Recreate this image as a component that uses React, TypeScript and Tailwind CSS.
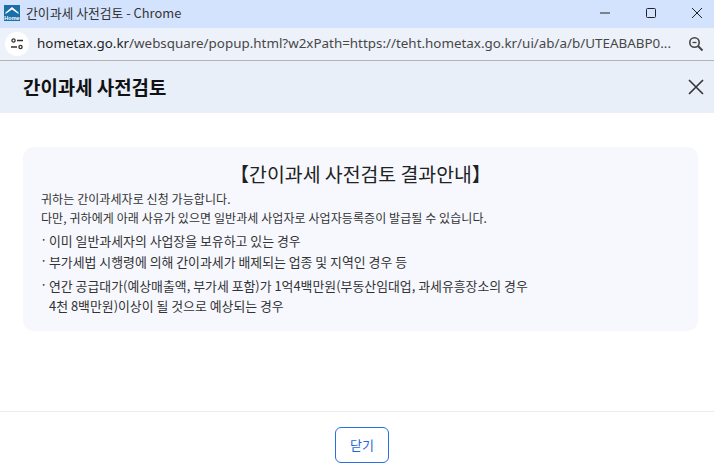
export default function App() {
  const f = { fontFamily: '"Noto Sans CJK KR", "Noto Sans", sans-serif' };
  const items = [
    { lines: ['이미 일반과세자의 사업장을 보유하고 있는 경우'], cls: 'pb-[1px]' },
    { lines: ['부가세법 시행령에 의해 간이과세가 배제되는 업종 및 지역인 경우 등'], cls: 'pb-[4px]' },
    { lines: ['연간 공급대가(예상매출액, 부가세 포함)가 1억4백만원(부동산임대업, 과세유흥장소의 경우', '4천 8백만원)이상이 될 것으로 예상되는 경우'], cls: '' },
  ];
  return (
    <div className="w-[714px] h-[474px] flex flex-col bg-white overflow-hidden" style={f}>
      <div className="h-[28px] bg-[#d3e3fd] flex items-center shrink-0 pb-[2px]">
        <svg width="16" height="16" viewBox="0 0 16 16" className="ml-[4px] mr-[6px] shrink-0">
          <rect width="16" height="16" fill="#1b6fa8" />
          <path d="M1.5 7.5 L8 2 L14.5 7.5 L14.5 9 L8 4.5 L1.5 9 Z" fill="#fff" />
          <text x="8" y="14.5" textAnchor="middle" fontSize="5.5" fontWeight="700" fill="#fff" fontFamily="Liberation Sans, sans-serif">Home</text>
        </svg>
        <span className="text-[12.85px] leading-none text-[#333]">간이과세 사전검토 - Chrome</span>
        <div className="ml-auto flex items-center">
          <svg width="12" height="12" viewBox="0 0 12 12" className="mr-[34px]"><path d="M1 6h10" stroke="#222" strokeWidth="1" /></svg>
          <svg width="12" height="12" viewBox="0 0 12 12" className="mr-[34px]"><rect x="1.5" y="1.5" width="9" height="9" rx="1" fill="none" stroke="#222" strokeWidth="1" /></svg>
          <svg width="12" height="12" viewBox="0 0 12 12" className="mr-[11px]"><path d="M1 1l10 10M11 1L1 11" stroke="#222" strokeWidth="1" /></svg>
        </div>
      </div>
      <div className="h-[32px] bg-[#edf2fa] flex items-center shrink-0 border-b border-[#b4b4b4] box-content">
        <div className="w-[24px] h-[24px] ml-[5px] rounded-full bg-white flex items-center justify-center shrink-0">
          <svg width="14" height="14" viewBox="0 0 14 14" fill="none" stroke="#333" strokeWidth="1.3">
            <circle cx="3.5" cy="3.5" r="1.6" /><path d="M7 3.5h6M1 10h6" /><circle cx="10.5" cy="10" r="1.6" />
          </svg>
        </div>
        <span className="ml-[8px] text-[13.4px] leading-none text-[#1f1f1f] whitespace-nowrap" style={{ fontFamily: '"Noto Sans", sans-serif' }}>
          hometax.go.kr<span className="text-[#474747]">/websquare/popup.html?w2xPath=https://teht.hometax.go.kr/ui/ab/a/b/UTEABABP0...</span>
        </span>
        <svg width="16" height="16" viewBox="0 0 16 16" fill="none" stroke="#444" className="ml-auto mr-[10px] shrink-0">
          <circle cx="6.5" cy="6.5" r="4.7" strokeWidth="1.6" /><path d="M10 10l4.5 4.5" strokeWidth="2" /><path d="M4.5 6.5h4" strokeWidth="1.3" />
        </svg>
      </div>
      <div className="h-[52px] bg-[#e8eff9] flex items-center justify-between shrink-0 pl-[23px] pr-[9px]">
        <h1 className="text-[18.9px] font-bold text-[#111]">간이과세 사전검토</h1>
        <svg width="18" height="18" viewBox="0 0 18 18" fill="none" stroke="#333" strokeWidth="1.6"><path d="M2 2l14 14M16 2L2 16" /></svg>
      </div>
      <div className="flex-1 pl-[23px] pr-[16px] pt-[34px]">
        <div className="h-[184px] rounded-[10px] bg-[#f6f8fe] px-[18px] pt-[13px] text-[#333]">
          <div className="text-center text-[19.4px] leading-[28px] text-[#222]">【간이과세 사전검토 결과안내】</div>
          <p className="mt-[1px] text-[12px] leading-[19px] tracking-[0.08px]">귀하는 간이과세자로 신청 가능합니다.</p>
          <p className="text-[12px] leading-[19px] tracking-[0.08px]">다만, 귀하에게 아래 사유가 있으면 일반과세 사업자로 사업자등록증이 발급될 수 있습니다.</p>
          <ul className="mt-[4px] text-[12.9px] leading-[20px]">
            {items.map((it, i) => (
              <li key={i} className={`flex ${it.cls}`}>
                <span className="w-[8px] shrink-0 text-[9px] leading-[12px] pt-[3px] font-bold">·</span>
                <span>{it.lines.map((l) => <span key={l} className="block">{l}</span>)}</span>
              </li>
            ))}
          </ul>
        </div>
      </div>
      <div className="h-[63px] border-t border-[#e8ebf2] flex items-center justify-center shrink-0 pl-[10px] pt-[3px]">
        <button className="w-[54px] h-[36px] rounded-[6px] border border-[#2a6fe0] text-[#1f66dd] text-[13px] bg-white">닫기</button>
      </div>
    </div>
  );
}
